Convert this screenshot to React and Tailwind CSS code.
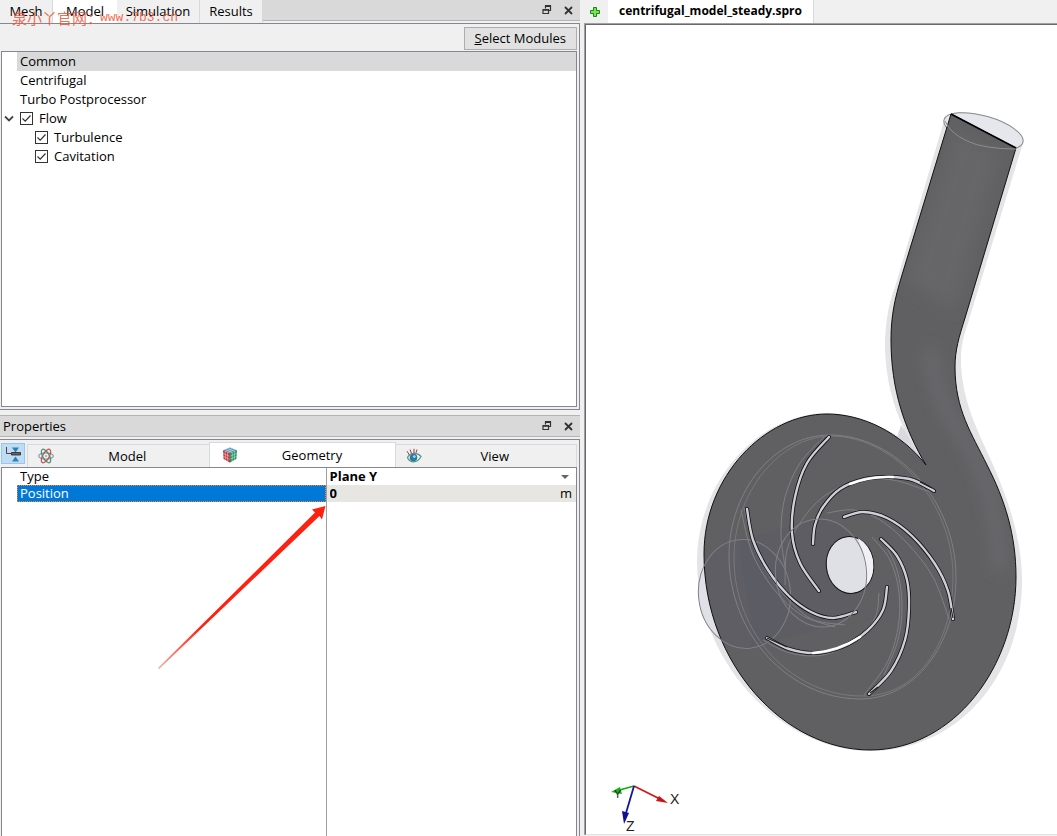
import React from "react";

/* ---------- geometry helpers ---------- */

function curve(points) {
  const n = points.length;
  const at = (i) => points[Math.max(0, Math.min(n - 1, i))];
  let d = `M${points[0][0]} ${points[0][1]}`;
  for (let i = 0; i < n - 1; i++) {
    const [a, b, c, e] = [at(i - 1), at(i), at(i + 1), at(i + 2)];
    const p = [b[0] + (c[0] - a[0]) / 6, b[1] + (c[1] - a[1]) / 6];
    const q = [c[0] - (e[0] - b[0]) / 6, c[1] - (e[1] - b[1]) / 6];
    d += ` C${p[0].toFixed(1)} ${p[1].toFixed(1)} ${q[0].toFixed(1)} ${q[1].toFixed(1)} ${c[0]} ${c[1]}`;
  }
  return d;
}

const BODY =
  "M951 114L902 275C895 298 891 315 891 340C891 390 905 430 926 465" +
  "C900 432 862 414 827 414C765 414 704 476 704 554C704 665 785 750 870 750" +
  "C955 750 1016 665 1016 577C1016 535 1005 500 987 465C972 434 955 410 955 367" +
  "C955 350 959 337 965 318L1016 148Z";

const SHELL =
  "M944 121L895 287C888 305 885 325 885 348C886 380 893 405 903 427L906 442" +
  "C880 422 850 413 827 413C760 413 697 480 697 562C697 660 780 751 870 751" +
  "C955 751 1022 680 1022 580C1022 535 1005 490 985 447C975 425 961 395 961 360" +
  "C961 345 964 335 968 323L1023 143L985 118Z";

const RIM =
  "M830 435C775 435 729 490 729 556C729 635 790 699 860 699C915 699 956 645 956 577C956 500 895 435 830 435Z";
const RIM_INNER =
  "M832 436C780 436 734 492 734 558C734 634 792 696 862 696C915 697 953 645 953 577C953 502 895 437 832 436Z";

const BLADES = [
  [[829, 437], [807, 463], [795, 497], [792, 533], [800, 563], [819, 591]],
  [[934, 491], [913, 480], [890, 477], [865, 479], [840, 489], [823, 507], [815, 525], [813, 544]],
  [[844, 517], [863, 512], [887, 518], [912, 536], [935, 564], [948, 591], [953, 619]],
  [[881, 539], [897, 556], [907, 580], [909, 608], [905, 640], [891, 671], [869, 694]],
  [[767, 638], [789, 649], [815, 653], [842, 647], [867, 631], [883, 610], [887, 587]],
  [[747, 509], [753, 540], [768, 570], [789, 596], [811, 612], [833, 618], [856, 612]],
];

const BLADE_GHOSTS = [
  [[824, 437], [800, 463], [785, 497], [781, 533], [785, 567]],
  [[930, 492], [893, 480], [857, 481], [823, 497], [800, 523], [787, 550], [785, 585]],
  [[827, 513], [854, 510], [880, 520], [907, 543], [933, 577], [949, 619]],
  [[872, 537], [890, 560], [899, 592], [898, 628], [887, 663], [864, 695]],
  [[879, 593], [875, 618], [855, 641], [823, 655], [790, 653], [763, 640]],
  [[741, 510], [753, 555], [777, 593], [807, 618], [845, 625]],
  [[744, 508], [756, 552], [780, 590], [808, 617], [835, 627]],
  [[883, 540], [897, 570], [902, 605], [898, 640], [884, 675]],
];

const HIGHLIGHTS = [
  "M893 477Q872 476 850 484",
  "M813 653Q838 651 860 637",
];

/* ---------- icons ---------- */

function RestoreIcon() {
  return (
    <svg width="10" height="10" viewBox="0 0 10 10" fill="none" stroke="#333" aria-hidden="true">
      <path d="M3.500 3.500v-3h5v5H7M3 1.500h6M1 4.500h5.500v4H1zM1 5.200h5.500" strokeWidth="1.200" />
    </svg>
  );
}

function CloseIcon() {
  return (
    <svg width="9" height="9" viewBox="0 0 9 9" fill="none" stroke="#333" strokeWidth="1.800" aria-hidden="true">
      <path d="M1 1l7 7M8 1L1 8" />
    </svg>
  );
}

function PlusIcon() {
  return (
    <svg width="12" height="12" viewBox="0 0 12 12" aria-hidden="true">
      <path d="M4.500 1.500h3v3h3v3h-3v3h-3v-3h-3v-3h3z" fill="#7fe04a" stroke="#108a1c" />
    </svg>
  );
}

function CollapseIcon() {
  return (
    <svg width="16" height="16" viewBox="0 0 16 16" aria-hidden="true">
      <path d="M1.500 1v6.500h5" fill="none" stroke="#445" />
      <path d="M7 1.500h7l-3.500 5z M7 15.500h7l-3.500-5z" fill="#2e7eb8" />
      <path d="M6.500 6.500h9v2.500h-9z" fill="#666" stroke="#222" strokeWidth=".8" />
    </svg>
  );
}

function AtomIcon() {
  return (
    <svg width="16" height="16" viewBox="0 0 16 16" fill="none" strokeWidth="1.200" aria-hidden="true">
      <ellipse cx="8" cy="8" rx="7.300" ry="3.200" stroke="#6f9db4" />
      <ellipse cx="8" cy="8" rx="7.600" ry="3.200" stroke="#3f9570" transform="rotate(60 8 8)" />
      <ellipse cx="8" cy="8" rx="7.600" ry="3.200" stroke="#cc4d50" transform="rotate(120 8 8)" />
      <circle cx="8" cy="8" r="1" fill="#8aa" />
    </svg>
  );
}

function CubeIcon() {
  return (
    <svg width="16" height="16" viewBox="0 0 16 16" aria-hidden="true">
      <path d="M8 .5l7 2.800-7 3-7-3z" fill="#4d8fb5" />
      <path d="M1 3.300l6.800 3v9.200L1.600 12z" fill="#c9343c" />
      <path d="M15 3.300l-7.200 3v9.200l6.600-3.500z" fill="#25955f" />
      <path
        d="M1 6.400l6.800 3 7-3M1.300 9.300l6.500 3 6.800-3M3.200 4.300l.3 8.500M5.500 5.300l.1 9M12.700 4.300l-.3 8.700M10.300 5.300l-.1 9M3.300 2.400l7 2.900M5.700 1.400l7 2.900M12.700 2.400l-7 2.900M10.300 1.400l-7 2.900"
        stroke="#fff"
        strokeWidth=".6"
        opacity=".65"
        fill="none"
      />
      <path d="M7.800 6.300v9.200" stroke="#7a4a50" strokeWidth=".8" />
    </svg>
  );
}

function EyeIcon() {
  return (
    <svg width="16" height="16" viewBox="0 0 16 16" fill="none" aria-hidden="true">
      <path d="M1.500 9.500C4 4.500 11 4 15 8.500c-2 4-5 5.500-8 5.300-2.500-.2-4.700-2-5.500-4.300z" fill="#f2f6f4" stroke="#4f9d80" strokeWidth="1.200" />
      <circle cx="7.500" cy="9.600" r="3.800" fill="#2f77a5" />
      <circle cx="8.300" cy="8.600" r="1.400" fill="#a9d3ea" />
      <path d="M3.300 6.800L1 3.200M5.500 5.500L4 1.500M8 5V.800M10 4.800L11 1.500" stroke="#9b3a48" />
    </svg>
  );
}

/* ---------- small controls ---------- */

function PanelButtons() {
  return (
    <div className="flex items-center gap-3 pr-[7px]">
      <button type="button" aria-label="Restore panel"><RestoreIcon /></button>
      <button type="button" aria-label="Close panel"><CloseIcon /></button>
    </div>
  );
}

function Check({ id, label }) {
  return (
    <label htmlFor={id} className="flex items-center gap-1.5">
      <span className="grid size-[13px] shrink-0">
        <input
          id={id}
          type="checkbox"
          defaultChecked
          className="peer col-start-1 row-start-1 size-[13px] appearance-none border border-[#333] bg-white"
        />
        <svg
          viewBox="0 0 13 13"
          aria-hidden="true"
          className="pointer-events-none invisible col-start-1 row-start-1 size-[13px] peer-checked:visible"
        >
          <path d="M2.500 6.500L5.200 9.200 10.500 3.500" fill="none" stroke="#333" strokeWidth="1.200" />
        </svg>
      </span>
      {label}
    </label>
  );
}

/* ---------- panels ---------- */

const MAIN_TABS = [
  { label: "Mesh", style: "w-[53px] border-r border-[#d9d9d9] bg-[#f0f0f0]" },
  { label: "Model", style: "w-[64px] bg-white" },
  { label: "Simulation", style: "w-[82px] bg-[#f0f0f0]" },
  { label: "Results", style: "w-[64px] border-x border-[#d9d9d9] bg-[#f0f0f0]" },
];

function ModelPanel() {
  return (
    <section className="relative flex h-[410px] shrink-0 flex-col">
      <div className="flex h-[23px] shrink-0 items-start">
        <div role="tablist" className="flex h-full">
          {MAIN_TABS.map((tab) => (
            <button
              key={tab.label}
              type="button"
              role="tab"
              aria-selected={tab.label === "Model"}
              className={`${tab.style} h-full pb-0.5 text-center`}
            >
              {tab.label}
            </button>
          ))}
        </div>
        <div className="flex h-[21px] flex-1 items-center justify-end border-b border-[#b4b4b4] bg-[#d9d9d9]">
          <PanelButtons />
        </div>
      </div>
      <div className="flex min-h-0 flex-1 flex-col border-y border-r border-[#828790] pr-0.5 pb-0.5 pl-px">
        <div className="flex h-[27px] shrink-0 items-end justify-end pb-px">
          <button type="button" className="h-[23px] border border-[#adadad] bg-[#e1e1e1] px-2.5 pb-0.5">
            <span className="underline">S</span>elect Modules
          </button>
        </div>
        <ul className="min-h-0 flex-1 border border-[#828790] bg-white leading-[19px]">
          <li className="ml-[15px] bg-[#d9d9d9] pl-[3px]">Common</li>
          <li className="pl-[18px]">Centrifugal</li>
          <li className="pl-[18px]">Turbo Postprocessor</li>
          <li>
            <div className="flex items-center">
              <button type="button" aria-label="Collapse Flow" className="flex w-[18px] pl-0.5">
                <svg width="10" height="10" viewBox="0 0 10 10" aria-hidden="true">
                  <path d="M1 2.500l4 4 4-4" fill="none" stroke="#444" strokeWidth="1.800" />
                </svg>
              </button>
              <Check id="flow" label="Flow" />
            </div>
            <ul className="pl-[33px]">
              <li><Check id="turbulence" label="Turbulence" /></li>
              <li><Check id="cavitation" label="Cavitation" /></li>
            </ul>
          </li>
        </ul>
      </div>
      <p className="pointer-events-none absolute top-2 left-3 flex items-center whitespace-nowrap text-[#ee5535]/85">
        <span className="w-[88px] font-['Noto_Sans_CJK_SC',sans-serif] text-[15px] leading-5">泉小丫官网：</span>
        <span className="font-['Liberation_Mono',monospace] text-[13px]">www.7b3.cn</span>
      </p>
    </section>
  );
}

function PropertiesPanel() {
  return (
    <section className="relative mt-[5px] flex min-h-0 flex-1 flex-col">
      <header className="flex h-[22px] shrink-0 items-center justify-between border-y border-[#b4b4b4] bg-[#d9d9d9] pl-[3px]">
        <h2>Properties</h2>
        <PanelButtons />
      </header>
      <div className="mt-0.5 flex min-h-0 flex-1 flex-col border-t border-r border-[#828790] pr-0.5 pl-px">
        <div className="flex h-[27px] shrink-0 items-end">
          <button
            type="button"
            aria-label="Collapse tree"
            className="mr-0.5 mb-[3px] flex h-[21px] w-6 items-center justify-center border border-[#90c8f6] bg-[#c0dcf3]"
          >
            <CollapseIcon />
          </button>
          <div role="tablist" className="flex h-full min-w-0 flex-1 items-end">
            <button type="button" role="tab" className="flex h-[23px] flex-1 items-center border-t border-l border-[#d9d9d9] pr-2 pl-2.5">
              <AtomIcon />
              <span className="flex-1">Model</span>
            </button>
            <button type="button" role="tab" aria-selected="true" className="flex h-[25px] w-[187px] items-center border-x border-t border-[#d9d9d9] bg-white pr-2 pl-3">
              <CubeIcon />
              <span className="flex-1">Geometry</span>
            </button>
            <button type="button" role="tab" className="flex h-[23px] flex-1 items-center border-t border-r border-[#d9d9d9] pr-2 pl-2.5">
              <EyeIcon />
              <span className="flex-1">View</span>
            </button>
          </div>
        </div>
        <div className="flex min-h-0 flex-1 flex-col border-x border-t border-[#828790] bg-white">
          <table className="w-full shrink-0 table-fixed border-collapse leading-[17px]">
            <colgroup>
              <col className="w-[324px]" />
              <col />
            </colgroup>
            <tbody>
              <tr className="h-[17px]">
                <th scope="row" className="p-0 pl-[18px] text-left font-normal">
                  <label htmlFor="type">Type</label>
                </th>
                <td className="border-l border-[#a0a0a0] p-0">
                  <div className="flex items-center pr-[7px]">
                    <select id="type" defaultValue="y" className="h-[17px] flex-1 appearance-none bg-transparent pl-[3px] font-bold leading-[17px] outline-none">
                      <option value="x">Plane X</option>
                      <option value="y">Plane Y</option>
                      <option value="z">Plane Z</option>
                    </select>
                    <svg width="8" height="4" viewBox="0 0 8 4" aria-hidden="true">
                      <path d="M0 0h8L4 4z" fill="#666" />
                    </svg>
                  </div>
                </td>
              </tr>
              <tr className="h-[17px]">
                <th scope="row" className="p-0 pl-[15px] text-left font-normal">
                  <label htmlFor="position" className="block h-[17px] border border-dotted border-[#ff8728] bg-[#0078d7] pl-0.5 leading-[14px] text-white">
                    Position
                  </label>
                </th>
                <td className="border-l border-[#a0a0a0] bg-[#e8e6e2] p-0">
                  <div className="flex items-center pr-1">
                    <input id="position" type="text" defaultValue="0" className="h-[17px] min-w-0 flex-1 bg-transparent pl-[3px] font-bold outline-none" />
                    <span>m</span>
                  </div>
                </td>
              </tr>
            </tbody>
          </table>
          <div className="ml-[324px] flex-1 border-l border-[#a0a0a0]" />
        </div>
      </div>
      <svg
        width="170"
        height="166"
        viewBox="157 504 170 166"
        aria-hidden="true"
        className="pointer-events-none absolute top-[89px] left-[157px]"
      >
        <defs>
          <linearGradient id="pointer" gradientUnits="userSpaceOnUse" x1="158" y1="669" x2="200" y2="627">
            <stop offset="0" stopColor="#ff2010" stopOpacity=".4" />
            <stop offset="1" stopColor="#ff2010" />
          </linearGradient>
        </defs>
        <path d="M158 668L315 512.500 312 509.500 325.500 506 322 519.500 319.500 516 159 669Z" fill="url(#pointer)" />
      </svg>
    </section>
  );
}

function Viewport() {
  return (
    <svg
      viewBox="586 25 471 809"
      preserveAspectRatio="xMidYMid meet"
      role="img"
      aria-label="Centrifugal pump cross-section"
      className="block h-full w-full"
    >
      <defs>
        <clipPath id="body"><path d={BODY} /></clipPath>
        <filter id="soft" x="-50%" y="-50%" width="200%" height="200%">
          <feGaussianBlur stdDeviation="8" />
        </filter>
      </defs>

      <path d={SHELL} fill="#e4e4e7" />
      <path d="M901 425L926 465 897 437Z" fill="#d9d9e0" />
      <ellipse cx="983.500" cy="131" rx="41" ry="15" transform="rotate(16 983.500 131)" fill="#e6e6ed" stroke="#888" />
      <ellipse cx="744.500" cy="594" rx="46" ry="54.500" transform="rotate(-6 744.500 594)" fill="#e0e0e8" />

      <path d={BODY} fill="#606062" />
      <g clipPath="url(#body)">
        <path d="M905 280L955 130 1000 155 955 310Z" fill="#666668" filter="url(#soft)" />
        <path d="M930 350Q935 400 965 440T1000 570" fill="none" stroke="#707074" strokeWidth="8" filter="url(#soft)" />
        <path
          d="M740 540L816 519C850 522 866 550 866 580C866 605 850 625 830 626L749 648C760 620 740 590 740 540Z"
          fill="#5a5868"
          opacity=".35"
        />
        <ellipse cx="744.500" cy="594" rx="46" ry="54.500" transform="rotate(-6 744.500 594)" fill="#5c5b66" opacity=".5" />
      </g>
      <path d={BODY} fill="none" stroke="#111" strokeWidth="1" />
      <path d="M951 114L1016 148" stroke="#000" strokeWidth="1.500" />
      <path d="M945 121Q950 133 967 141T1016 149" fill="none" stroke="#8d8d8d" />

      <g fill="none" stroke="#808084" strokeWidth="1">
        <path d={RIM} />
        <path d={RIM_INNER} opacity=".75" />
        {BLADE_GHOSTS.map((points, i) => (
          <path key={i} d={curve(points)} />
        ))}
        <ellipse cx="744.500" cy="594" rx="46" ry="54.500" transform="rotate(-6 744.500 594)" />
      </g>

      <g fill="none" strokeLinecap="round">
        {BLADES.map((points, i) => (
          <g key={i}>
            <path d={curve(points)} stroke="#101010" strokeWidth="4" />
            <path d={curve(points)} stroke="#cfcfd8" strokeWidth="2.400" />
          </g>
        ))}
        {HIGHLIGHTS.map((d) => (
          <path key={d} d={d} stroke="#fff" strokeWidth="2.400" />
        ))}
      </g>
      <path d="M920 482L932 488M767 638L787 647M951 608L953 618M878 687L870 693" stroke="#222" strokeWidth="1.200" />

      <ellipse cx="850" cy="565" rx="23.700" ry="28.500" transform="rotate(-6 850 565)" fill="#dfdfe6" stroke="#111" />
      <path d="M858 538Q867 560 866 586Q875 577 873 560Q870 545 858 538Z" fill="#f1f1f5" />
      <ellipse cx="821" cy="573" rx="45.500" ry="54" transform="rotate(-6 821 573)" fill="none" stroke="#808084" />

      <g strokeWidth="1.800" fill="none">
        <path d="M634 786L660 799" stroke="#d01818" />
        <path d="M634 786L616 791" stroke="#18a818" />
        <path d="M634 786L626 813" stroke="#1414a0" />
      </g>
      <path d="M668 803L656 801 659 796Z" fill="#c81414" />
      <path d="M611 792L620 787 622 794Z" fill="#14b414" />
      <path d="M624 824L622 811 629 813Z" fill="#101090" />
      <g fill="#222" className="font-['Liberation_Sans',sans-serif]">
        <text x="670" y="804" fontSize="14">X</text>
        <text x="614" y="798" fontSize="11">Y</text>
        <text x="626" y="831" fontSize="14">Z</text>
      </g>
    </svg>
  );
}

export default function App() {
  return (
    <div className="flex h-screen overflow-hidden bg-[#f0f0f0] font-['Open_Sans','Noto_Sans',sans-serif] text-[13px] leading-5 text-black">
      <aside className="flex w-[580px] shrink-0 flex-col">
        <ModelPanel />
        <PropertiesPanel />
      </aside>
      <main className="ml-1 flex min-w-0 flex-1 flex-col pb-px">
        <div className="flex h-[23px] shrink-0 items-stretch">
          <button type="button" aria-label="New project" className="flex w-6 items-center justify-center pr-0.5">
            <PlusIcon />
          </button>
          <button type="button" className="border-r border-[#d9d9d9] bg-white px-[11px] pb-0.5 text-xs font-bold">
            centrifugal_model_steady.spro
          </button>
        </div>
        <div className="min-h-0 flex-1 border-t border-l border-[#a0a0a0]">
          <div className="h-full border-t border-b border-l border-t-[#696969] border-b-[#e3e3e3] border-l-[#696969] bg-white">
            <Viewport />
          </div>
        </div>
      </main>
    </div>
  );
}
